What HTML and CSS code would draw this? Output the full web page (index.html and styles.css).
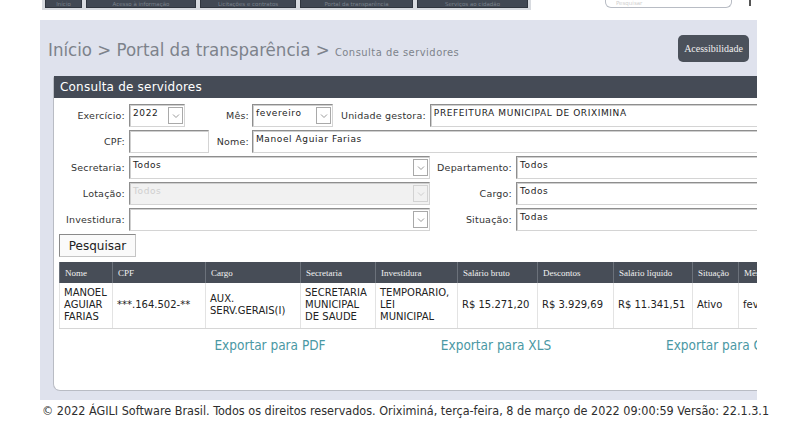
FILE: index.html
```html
<!DOCTYPE html>
<html lang="pt-BR">
<head>
  <meta charset="UTF-8">
  <title>Consulta de servidores</title>
  <link rel="stylesheet" href="styles.css">
</head>
<body>

<div class="topbar">
  <nav class="menu">
    <span class="tab t1">Início</span>
    <span class="tab t2">Acesso à informação</span>
    <span class="tab t3">Licitações e contratos</span>
    <span class="tab t4">Portal da transparência</span>
    <span class="tab t5">Serviços ao cidadão</span>
  </nav>
  <div class="search">Pesquisar</div>
  <span class="search-go"></span>
</div>

<div class="band">
  <div class="crumbs">
    <div class="path">Início &gt; Portal da transparência &gt; <small>Consulta de servidores</small></div>
    <span class="access">Acessibilidade</span>
  </div>

  <div class="panel">
    <div class="panel-title">Consulta de servidores</div>
    <div class="panel-body">

      <div class="row">
        <label class="lbl">Exercício:</label>
        <div class="field select w-year">2022<span class="arrow"><svg width="8" height="6" viewBox="0 0 8 6"><polyline points="1,1.5 4,4.5 7,1.5" fill="none" stroke="#9a9a9a" stroke-width="1"/></svg></span></div>
        <label class="lbl l-mes">Mês:</label>
        <div class="field select w-mes">fevereiro<span class="arrow"><svg width="8" height="6" viewBox="0 0 8 6"><polyline points="1,1.5 4,4.5 7,1.5" fill="none" stroke="#9a9a9a" stroke-width="1"/></svg></span></div>
        <label class="lbl l-unid">Unidade gestora:</label>
        <div class="field w-unid">PREFEITURA MUNICIPAL DE ORIXIMINA</div>
      </div>

      <div class="row">
        <label class="lbl">CPF:</label>
        <div class="field w-cpf"></div>
        <label class="lbl l-nome">Nome:</label>
        <div class="field w-nome">Manoel Aguiar Farias</div>
      </div>

      <div class="row">
        <label class="lbl">Secretaria:</label>
        <div class="field select w-wide">Todos<span class="arrow"><svg width="8" height="6" viewBox="0 0 8 6"><polyline points="1,1.5 4,4.5 7,1.5" fill="none" stroke="#9a9a9a" stroke-width="1"/></svg></span></div>
        <label class="lbl l-right">Departamento:</label>
        <div class="field w-right">Todos</div>
      </div>

      <div class="row">
        <label class="lbl">Lotação:</label>
        <div class="field select w-wide disabled">Todos<span class="arrow"><svg width="8" height="6" viewBox="0 0 8 6"><polyline points="1,1.5 4,4.5 7,1.5" fill="none" stroke="#cfcfcf" stroke-width="1"/></svg></span></div>
        <label class="lbl l-right">Cargo:</label>
        <div class="field w-right">Todos</div>
      </div>

      <div class="row">
        <label class="lbl">Investidura:</label>
        <div class="field select w-wide"><span class="arrow"><svg width="8" height="6" viewBox="0 0 8 6"><polyline points="1,1.5 4,4.5 7,1.5" fill="none" stroke="#9a9a9a" stroke-width="1"/></svg></span></div>
        <label class="lbl l-right">Situação:</label>
        <div class="field w-right">Todas</div>
      </div>

      <button class="btn">Pesquisar</button>

      <table class="results">
        <thead>
          <tr>
            <th class="c-nome">Nome</th>
            <th class="c-cpf">CPF</th>
            <th class="c-cargo">Cargo</th>
            <th class="c-sec">Secretaria</th>
            <th class="c-inv">Investidura</th>
            <th class="c-bruto">Salário bruto</th>
            <th class="c-desc">Descontos</th>
            <th class="c-liq">Salário líquido</th>
            <th class="c-sit">Situação</th>
            <th class="c-mes">Mês</th>
          </tr>
        </thead>
        <tbody>
          <tr>
            <td>MANOEL AGUIAR FARIAS</td>
            <td>***.164.502-**</td>
            <td>AUX. SERV.GERAIS(I)</td>
            <td>SECRETARIA MUNICIPAL DE SAUDE</td>
            <td class="narrow">TEMPORARIO, LEI MUNICIPAL</td>
            <td>R$ 15.271,20</td>
            <td>R$ 3.929,69</td>
            <td>R$ 11.341,51</td>
            <td>Ativo</td>
            <td>fevereiro</td>
          </tr>
        </tbody>
      </table>

      <div class="exports">
        <a href="#">Exportar para PDF</a>
        <a href="#">Exportar para XLS</a>
        <a href="#">Exportar para CSV</a>
      </div>

    </div>
  </div>
</div>

<footer class="footer">© 2022 ÁGILI Software Brasil. Todos os direitos reservados. Oriximiná, terça-feira, 8 de março de 2022 09:00:59 Versão: 22.1.3.1</footer>

</body>
</html>
```

FILE: styles.css
```css
* {
  box-sizing: border-box;
}

html, body {
  margin: 0;
  padding: 0;
  background: #fff;
  font-family: "DejaVu Sans", Verdana, sans-serif;
  color: #333;
  overflow: hidden;
}

/* barra do topo */
.topbar {
  height: 20px;
  display: flex;
  align-items: flex-start;
}

.menu {
  display: flex;
  gap: 4px;
  margin-left: 42px;
  padding: 0 3px 2px 3px;
  background: #d8dbe0;
}

.tab {
  height: 8px;
  line-height: 8px;
  background: #414853;
  color: #7a818b;
  font-size: 5.5px;
  text-align: center;
  white-space: nowrap;
  border: 1px solid #2f353e;
  border-top: none;
}

.t1 { width: 37px; }
.t2 { width: 110px; }
.t3 { width: 96px; }
.t4 { width: 113px; }
.t5 { width: 111px; }

.search {
  margin-left: 74px;
  width: 127px;
  height: 8px;
  border: 1px solid #b8bcc4;
  border-top: none;
  border-radius: 0 0 6px 6px;
  font-size: 5.5px;
  line-height: 7px;
  color: #d0d0d0;
  padding-left: 10px;
}

.search-go {
  width: 2px;
  height: 6px;
  background: #555;
  margin-left: 17px;
}

/* faixa central */
.band {
  margin-left: 40px;
  width: 717px;
  height: 380px;
  background: #dfe2ed;
  overflow: hidden;
}

.crumbs {
  display: flex;
  justify-content: space-between;
  align-items: center;
  height: 56px;
  padding: 0 8px 0 8px;
}

.path {
  font-family: "DejaVu Sans Condensed", "DejaVu Sans", sans-serif;
  font-size: 18.5px;
  color: #7d828b;
  padding-top: 2px;
}

.path small {
  font-size: 11px;
  letter-spacing: 0.5px;
}

.access {
  background: #4b515b;
  color: #f0f0f0;
  font-family: "Liberation Serif", serif;
  font-size: 10px;
  padding: 0 6px;
  height: 27px;
  line-height: 27px;
  border-radius: 5px;
  margin-top: 1px;
}

.panel {
  margin-left: 13px;
  width: 760px;
  height: 315px;
  background: #fff;
  border: 1px solid #b9bcc4;
  border-top: none;
  border-radius: 3px 0 0 7px;
}

.panel-title {
  background: #454b56;
  color: #fff;
  font-size: 12px;
  height: 22px;
  line-height: 23px;
  padding-left: 6px;
  letter-spacing: 0.2px;
}

.panel-body {
  padding: 6px 0 0 5px;
}

/* formulário */
.row {
  display: flex;
  align-items: center;
  height: 23px;
  margin-bottom: 3px;
  white-space: nowrap;
}

.lbl {
  font-size: 9.5px;
  color: #333;
  text-align: right;
  width: 66px;
  margin-right: 4px;
  flex: none;
  letter-spacing: 0.2px;
}

.l-mes  { width: 64px; margin-right: 3px; }
.l-unid { width: auto; margin-left: 8px; }
.l-nome { width: 40px; margin-right: 3px; }
.l-right { width: 82px; }

.field {
  position: relative;
  flex: none;
  height: 23px;
  border: 1px solid #8e8e8e;
  border-right-color: #d4d4d4;
  border-bottom-color: #d4d4d4;
  box-shadow: inset 1px 1px 0 #cfcfcf;
  background: #fff;
  font-size: 9px;
  letter-spacing: 0.6px;
  color: #222;
  padding: 3px 0 0 3px;
  overflow: hidden;
}

.select .arrow {
  position: absolute;
  right: 1px;
  top: 2px;
  bottom: 2px;
  width: 15px;
  border: 1px solid #a9a9a9;
  background: #fff;
  display: flex;
  align-items: center;
  justify-content: center;
}

.disabled {
  background: #f1f1f1;
  color: #cfcfcf;
}

.disabled .arrow {
  background: #f1f1f1;
  border-color: #d2d2d2;
}

.w-year  { width: 56px; }
.w-mes   { width: 81px; }
.w-unid  { width: 340px; }
.w-cpf   { width: 80px; }
.w-nome  { width: 520px; }
.w-wide  { width: 301px; }
.w-right { width: 260px; }

.btn {
  display: block;
  margin-top: 1px;
  width: 77px;
  height: 23px;
  background: #fafafa;
  border: 1px solid #8a8a8a;
  border-right-color: #c5c5c5;
  border-bottom-color: #c5c5c5;
  font-family: "DejaVu Sans", sans-serif;
  font-size: 12px;
  color: #222;
  padding: 0;
}

/* tabela */
.results {
  margin-top: 5px;
  border-collapse: collapse;
  table-layout: fixed;
  width: 760px;
}

.results th {
  background: #474d57;
  color: #f2f2f2;
  font-family: "Liberation Serif", serif;
  font-weight: normal;
  font-size: 9px;
  text-align: left;
  height: 21px;
  padding: 0 5px;
  border-left: 1px solid #6b717a;
  white-space: nowrap;
  overflow: hidden;
}

.results td {
  font-size: 10px;
  color: #222;
  line-height: 12px;
  height: 45px;
  padding: 0 4px;
  border-left: 1px solid #e3e3e3;
  border-bottom: 1px solid #d6d6d6;
  vertical-align: middle;
  overflow: hidden;
  white-space: nowrap;
}

.results td:nth-child(1),
.results td:nth-child(3),
.results td:nth-child(4),
.results td:nth-child(5) {
  white-space: normal;
}

.results td.narrow {
  padding-right: 12px;
}

.c-nome  { width: 53px; }
.c-cpf   { width: 93px; }
.c-cargo { width: 95px; }
.c-sec   { width: 75px; }
.c-inv   { width: 82px; }
.c-bruto { width: 80px; }
.c-desc  { width: 76px; }
.c-liq   { width: 79px; }
.c-sit   { width: 46px; }
.c-mes   { width: 81px; }

.exports {
  display: flex;
  padding-left: 98px;
  margin-top: 8px;
}

.exports a {
  width: 226px;
  text-align: center;
  flex: none;
  font-family: "DejaVu Sans Condensed", "DejaVu Sans", sans-serif;
  font-size: 13.5px;
  color: #4a98a4;
  text-decoration: none;
}

.footer {
  padding: 3px 0 0 42px;
  font-family: "DejaVu Sans Condensed", "DejaVu Sans", sans-serif;
  font-size: 12.5px;
  color: #2e2e2e;
  white-space: nowrap;
}
```
